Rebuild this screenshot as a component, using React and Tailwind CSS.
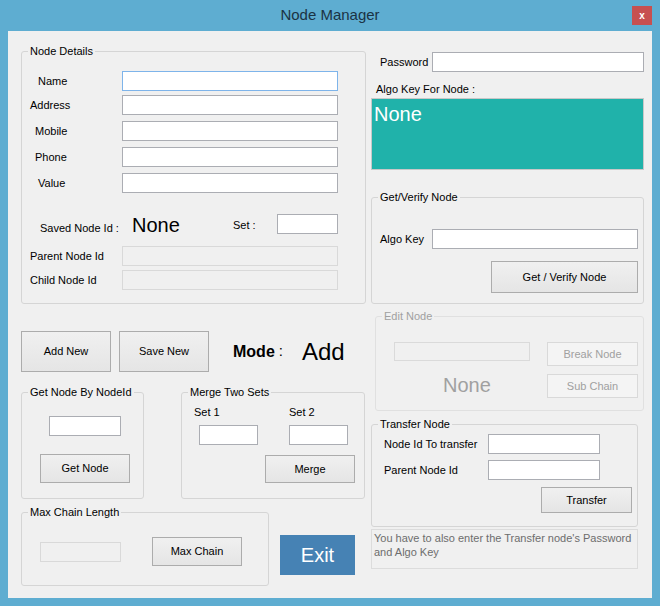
const FONT = "font-['Liberation_Sans',Arial,sans-serif]";

function Input({ className = "", focused, disabled }) {
  let look = "border-[#ABADB3] bg-white";
  if (focused) look = "border-[#7EB4EA] bg-white";
  if (disabled) look = "border-[#D9D9D9] bg-[#F0F0F0]";
  return <div className={`shrink-0 h-[20px] border ${look} ${className}`} />;
}

function Btn({ children, className = "", disabled }) {
  const look = disabled
    ? "border-[#D9D9D9] bg-[#F4F4F4] text-[#A0A0A0]"
    : "border-[#ACACAC] bg-linear-to-b from-[#F0F0F0] to-[#E5E5E5]";
  return (
    <div className={`shrink-0 flex items-center justify-center border ${look} ${className}`}>
      {children}
    </div>
  );
}

function Group({ label, className = "", children, disabled }) {
  return (
    <div
      className={`relative shrink-0 rounded-[3px] border ${
        disabled ? "border-[#E0E0E0]" : "border-[#D5D5D5]"
      } ${className}`}
    >
      <span
        className={`absolute left-[6px] top-[-8px] bg-[#F0F0F0] px-[2px] leading-[14px] ${
          disabled ? "text-[#A0A0A0]" : ""
        }`}
      >
        {label}
      </span>
      {children}
    </div>
  );
}

function Row({ label, pl, mt, focused }) {
  return (
    <div className={`flex h-[20px] items-center ${mt}`}>
      <span className={`w-[100px] ${pl}`}>{label}</span>
      <Input className="w-[216px]" focused={focused} />
    </div>
  );
}

export default function App() {
  return (
    <div className={`flex h-[606px] w-[660px] flex-col bg-[#5EADD1] text-[11px] text-black ${FONT}`}>
      {/* title bar */}
      <div className="relative flex h-[31px] shrink-0 items-center justify-center">
        <span className="text-[15px] text-[#1B3344]">Node Manager</span>
        <div className="absolute right-[8px] top-[6px] flex h-[19px] w-[20px] items-center justify-center bg-[#C75050] text-[10px] font-bold text-white">
          x
        </div>
      </div>

      {/* client area */}
      <div className="mx-[8px] flex h-[567px] bg-[#F0F0F0] pl-[13px]">
        {/* left column */}
        <div className="flex w-[345px] flex-col">
          <Group label="Node Details" className="mt-[20px] h-[253px] pt-[19px]">
            <Row label="Name" pl="pl-[16px]" focused />
            <Row label="Address" pl="pl-[8px]" mt="mt-[4px]" />
            <Row label="Mobile" pl="pl-[13px]" mt="mt-[6px]" />
            <Row label="Phone" pl="pl-[13px]" mt="mt-[6px]" />
            <Row label="Value" pl="pl-[16px]" mt="mt-[6px]" />

            <div className="mt-[21px] flex h-[20px] items-center">
              <span className="w-[110px] pl-[18px] pt-[8px]">Saved Node Id :</span>
              <span className="w-[101px] pt-[2px] text-[20px] leading-none">None</span>
              <span className="w-[44px] pt-[2px]">Set :</span>
              <Input className="w-[61px]" />
            </div>
            <div className="mt-[12px] flex h-[20px] items-center">
              <span className="w-[100px] pl-[8px]">Parent Node Id</span>
              <Input className="w-[216px]" disabled />
            </div>
            <div className="mt-[4px] flex h-[20px] items-center">
              <span className="w-[100px] pl-[8px]">Child Node Id</span>
              <Input className="w-[216px]" disabled />
            </div>
          </Group>

          <div className="mt-[27px] flex h-[41px] items-center">
            <Btn className="h-[41px] w-[90px]">Add New</Btn>
            <Btn className="ml-[8px] h-[41px] w-[90px]">Save New</Btn>
            <span className="ml-[24px] text-[16px] font-bold">Mode</span>
            <span className="ml-[4px] text-[15px]">:</span>
            <span className="ml-[19px] text-[24px]">Add</span>
          </div>

          <div className="mt-[20px] flex">
            <Group label="Get Node By NodeId" className="h-[107px] w-[123px]">
              <Input className="ml-[27px] mt-[23px] w-[72px]" />
              <Btn className="ml-[18px] mt-[18px] h-[29px] w-[90px]">Get Node</Btn>
            </Group>
            <Group label="Merge Two Sets" className="ml-[37px] h-[107px] w-[184px]">
              <div className="mt-[12px] flex h-[14px] leading-[14px]">
                <span className="ml-[12px] w-[95px]">Set 1</span>
                <span>Set 2</span>
              </div>
              <div className="mt-[6px] flex">
                <Input className="ml-[17px] w-[59px]" />
                <Input className="ml-[31px] w-[59px]" />
              </div>
              <Btn className="ml-[83px] mt-[10px] h-[28px] w-[90px]">Merge</Btn>
            </Group>
          </div>

          <div className="mt-[13px] flex items-start">
            <Group label="Max Chain Length" className="flex h-[74px] w-[248px] items-start">
              <Input className="ml-[18px] mt-[29px] w-[81px]" disabled />
              <Btn className="ml-[31px] mt-[24px] h-[29px] w-[90px]">Max Chain</Btn>
            </Group>
            <div className="ml-[11px] mt-[23px] flex h-[40px] w-[75px] items-center justify-center bg-[#4682B4] text-[20px] text-white">
              Exit
            </div>
          </div>
        </div>

        {/* right column */}
        <div className="ml-[5px] flex w-[273px] flex-col">
          <div className="mt-[21px] flex h-[20px] items-center">
            <span className="w-[61px] pl-[9px]">Password</span>
            <Input className="w-[212px]" />
          </div>
          <span className="mt-[10px] h-[14px] pl-[5px] leading-[14px]">Algo Key For Node :</span>
          <div className="mt-[2px] h-[72px] border border-[#C8C8C8] bg-[#20B2AA] pl-[2px] pt-[5px] text-[20px] leading-none text-white">
            None
          </div>

          <Group label="Get/Verify Node" className="mt-[27px] h-[107px] pt-[31px]">
            <div className="flex h-[20px] items-center">
              <span className="w-[60px] pl-[8px]">Algo Key</span>
              <Input className="w-[206px]" />
            </div>
            <Btn className="ml-[119px] mt-[12px] h-[32px] w-[147px]">Get / Verify Node</Btn>
          </Group>

          <Group label="Edit Node" disabled className="ml-[4px] mt-[12px] flex h-[95px] w-[269px]">
            <div className="flex w-[171px] flex-col items-start pl-[18px] pt-[25px]">
              <div className="h-[19px] w-[136px] border border-[#DADADA] bg-[#F0F0F0]" />
              <span className="ml-[49px] mt-[14px] text-[20px] leading-none text-[#A0A0A0]">None</span>
            </div>
            <div className="flex flex-col pt-[25px]">
              <Btn disabled className="h-[24px] w-[91px]">Break Node</Btn>
              <Btn disabled className="mt-[8px] h-[24px] w-[91px]">Sub Chain</Btn>
            </div>
          </Group>

          <Group label="Transfer Node" className="mt-[13px] h-[103px] w-[267px] pt-[9px]">
            <div className="flex h-[20px] items-center">
              <span className="w-[116px] pl-[12px]">Node Id To transfer</span>
              <Input className="w-[112px]" />
            </div>
            <div className="mt-[6px] flex h-[20px] items-center">
              <span className="w-[116px] pl-[12px]">Parent Node Id</span>
              <Input className="w-[112px]" />
            </div>
            <Btn className="ml-[169px] mt-[7px] h-[26px] w-[91px]">Transfer</Btn>
          </Group>

          <div className="mt-[2px] h-[40px] w-[267px] border border-[#DCDCDC] pl-[2px] pt-[1px] leading-[14px] text-[#6D6D6D]">
            You have to also enter the Transfer node's Password
            <br />
            and Algo Key
          </div>
        </div>
      </div>
    </div>
  );
}
